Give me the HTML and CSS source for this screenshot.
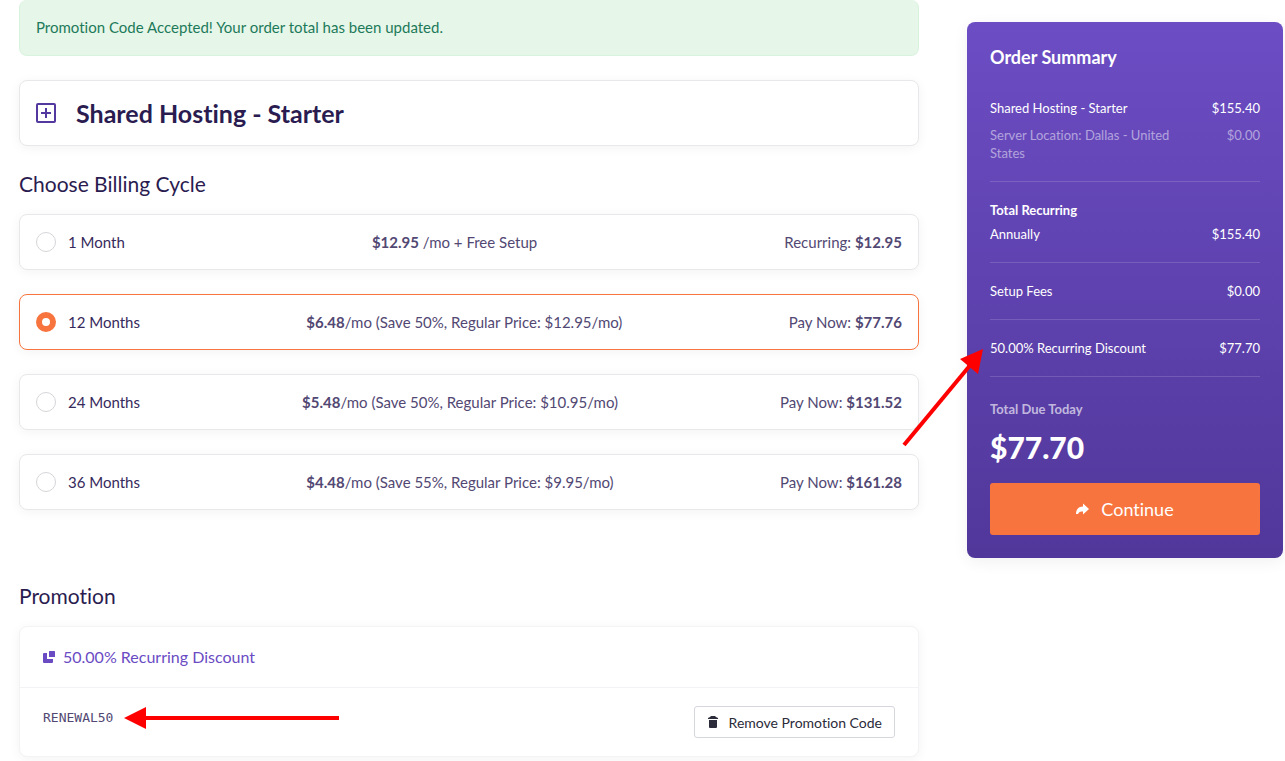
FILE: index.html
```html
<!DOCTYPE html>
<html lang="en">
<head>
    <meta charset="UTF-8">
    <meta name="viewport" content="width=device-width, initial-scale=1.0">
    <title>Configure Order</title>
    <link rel="stylesheet" href="styles.css">
</head>
<body>

<form class="page">
    <main class="main">
        <div class="alert" role="status">Promotion Code Accepted! Your order total has been updated.</div>

        <div class="card product">
            <svg class="product-icon" viewBox="0 0 20 20" aria-hidden="true">
                <rect x="1" y="1" width="18" height="18" rx="1" fill="none" stroke="currentColor" stroke-width="2"/>
                <path d="M10 5v10M5 10h10" fill="none" stroke="currentColor" stroke-width="2"/>
            </svg>
            <h1 class="product-name">Shared Hosting - Starter</h1>
        </div>

        <h2 class="section-title">Choose Billing Cycle</h2>

        <!-- Billing cycle options -->
        <div class="cycles">
            <label class="card cycle">
                <span class="cycle-name"><input class="radio" type="radio" name="cycle" value="1">1 Month</span>
                <span><b>$12.95</b> /mo + Free Setup</span>
                <span>Recurring: <b>$12.95</b></span>
            </label>
            <label class="card cycle selected">
                <span class="cycle-name"><input class="radio" type="radio" name="cycle" value="12" checked>12 Months</span>
                <span><b>$6.48</b>/mo (Save 50%, Regular Price: $12.95/mo)</span>
                <span>Pay Now: <b>$77.76</b></span>
            </label>
            <label class="card cycle">
                <span class="cycle-name"><input class="radio" type="radio" name="cycle" value="24">24 Months</span>
                <span><b>$5.48</b>/mo (Save 50%, Regular Price: $10.95/mo)</span>
                <span>Pay Now: <b>$131.52</b></span>
            </label>
            <label class="card cycle">
                <span class="cycle-name"><input class="radio" type="radio" name="cycle" value="36">36 Months</span>
                <span><b>$4.48</b>/mo (Save 55%, Regular Price: $9.95/mo)</span>
                <span>Pay Now: <b>$161.28</b></span>
            </label>
        </div>

        <!-- Promotion -->
        <h2 class="section-title promo-title">Promotion</h2>
        <div class="card promo">
            <div class="promo-head">
                <svg class="promo-icon" viewBox="0 0 12 12" aria-hidden="true">
                    <path d="M0 3q0-1 1-1h3v6h6v3q0 1-1 1H1q-1 0-1-1z" fill="currentColor"/>
                    <rect x="6" y="0" width="6" height="6" rx="0.5" fill="currentColor"/>
                </svg>
                50.00% Recurring Discount
            </div>
            <div class="promo-body">
                <div class="promo-applied">
                    <code class="promo-code">RENEWAL50</code>
                    <svg class="arrow-left" viewBox="0 0 215 22" aria-hidden="true">
                        <path d="M0 11L22 0v9h193v4H22v9z" fill="#ff0000"/>
                    </svg>
                </div>
                <button class="remove" type="button">
                    <svg class="remove-icon" viewBox="0 0 12 12" aria-hidden="true">
                        <path d="M1 2l2-1 1-1h4l1 1 2 1v1H1zM2 4h8v7q0 1-1 1H3q-1 0-1-1z" fill="currentColor"/>
                    </svg>
                    Remove Promotion Code
                </button>
            </div>
        </div>
    </main>

    <!-- Order summary -->
    <aside class="summary">
        <h2 class="summary-title">Order Summary</h2>
        <div class="group">
            <div class="line"><span>Shared Hosting - Starter</span><span>$155.40</span></div>
            <div class="line muted"><span>Server Location: Dallas - United States</span><span>$0.00</span></div>
        </div>
        <div class="group recurring">
            <div class="line"><b>Total Recurring</b></div>
            <div class="line"><span>Annually</span><span>$155.40</span></div>
        </div>
        <div class="group">
            <div class="line"><span>Setup Fees</span><span>$0.00</span></div>
        </div>
        <div class="group discount">
            <div class="line"><span>50.00% Recurring Discount</span><span>$77.70</span></div>
            <svg class="arrow-up" viewBox="0 0 84 102" aria-hidden="true">
                <path d="M3 99L71 17" fill="none" stroke="#ff0000" stroke-width="4"/>
                <path d="M82 3L59 13l18 15z" fill="#ff0000"/>
            </svg>
        </div>
        <div class="due-label">Total Due Today</div>
        <div class="due">$77.70</div>
        <button class="continue" type="submit">
            <svg class="continue-icon" viewBox="0 0 13 12" aria-hidden="true">
                <path d="M7 0.5l6 5.5-6 5.5V8.5C4 8.500 3 9 2 11H0C0 6 3 3.500 7 3.500z" fill="currentColor"/>
            </svg>
            Continue
        </button>
    </aside>
</form>

</body>
</html>
```

FILE: styles.css
```css
/* Page layout */
* {
    box-sizing: border-box;
}
body {
    margin: 0;
    font-family: Lato, "Open Sans", sans-serif;
    font-size: 15px;
    font-variant-ligatures: none;
    line-height: 24px;
    color: #524873;
    background-color: #fff;
}
h1, h2 {
    margin: 0;
}
button {
    font-family: inherit;
    font-variant-ligatures: none;
    cursor: pointer;
}
.page {
    display: grid;
    grid-template-columns: minmax(0, 1fr) 316px;
    column-gap: 48px;
    align-items: start;
    padding: 0 2px 4px 19px;
}
.alert {
    padding: 15px 16px 16px;
    border: 1px solid #d8f3dd;
    border-top: none;
    border-radius: 8px;
    background-color: #e6f6e9;
    color: #1d7a5a;
}
.card {
    border: 1px solid #e8e8ea;
    border-radius: 8px;
    background-color: #fff;
    box-shadow: 0 2px 12px rgba(0, 0, 0, 0.05);
}

/* Product */
.product {
    display: flex;
    align-items: center;
    gap: 20px;
    margin: 24px 0;
    padding: 16px;
}
.product-icon {
    width: 20px;
    height: 20px;
    color: #52389f;
}
.product-name {
    font-size: 25px;
    line-height: 32px;
    color: #2a1c50;
}
.section-title {
    margin-bottom: 16px;
    font-size: 21px;
    font-weight: 400;
    line-height: 28px;
    color: #2a1c50;
}

/* Billing cycles */
.cycles {
    display: grid;
    gap: 24px;
}
.cycle {
    display: flex;
    justify-content: space-between;
    align-items: center;
    padding: 15px 16px;
    cursor: pointer;
}
.cycle.selected {
    border-color: #f7743e;
}
.cycle-name {
    display: flex;
    align-items: center;
    gap: 12px;
    color: #362a5c;
}
.radio {
    appearance: none;
    width: 20px;
    height: 20px;
    margin: 0;
    border: 1px solid #d6d6da;
    border-radius: 50%;
    background-color: #fff;
}
.radio:checked {
    border: 6px solid #f7743e;
}

/* Promotion */
.promo-title {
    margin-top: 72px;
}
.promo {
    border-color: #f3f3f5;
}
.promo-head {
    display: flex;
    align-items: center;
    gap: 8px;
    padding: 18px 23px;
    border-bottom: 1px solid #f3f3f5;
    font-size: 16px;
    color: #6a4bc4;
}
.promo-icon {
    width: 12px;
    height: 12px;
}
.promo-body {
    display: flex;
    align-items: flex-start;
    justify-content: space-between;
    padding: 18px 23px;
}
.promo-applied {
    display: flex;
    align-items: center;
    gap: 11px;
}
.promo-code {
    font-family: "DejaVu Sans Mono", monospace;
    font-size: 13px;
    line-height: 24px;
}
.arrow-left {
    width: 215px;
    height: 22px;
}
.remove {
    display: flex;
    align-items: center;
    gap: 10px;
    height: 32px;
    padding: 0 12px;
    border: 1px solid #d6d6de;
    border-radius: 3px;
    background-color: #fff;
    font-size: 14px;
    color: #2b2b3a;
}
.remove-icon {
    width: 12px;
    height: 12px;
}

/* Order summary */
.summary {
    margin-top: 22px;
    padding: 23px;
    border-radius: 8px;
    background: linear-gradient(#6c4dc4, #51379a);
    box-shadow: 0 4px 16px rgba(0, 0, 0, 0.06);
    font-size: 13px;
    line-height: 18px;
    color: #fff;
}
.summary-title {
    margin-bottom: 11px;
    font-size: 18px;
    line-height: 24px;
}
.group {
    display: grid;
    gap: 9px;
    padding: 19px 0;
    border-bottom: 1px solid rgba(255, 255, 255, 0.15);
}
.recurring {
    gap: 6px;
}
.discount {
    position: relative;
}
.line {
    display: flex;
    justify-content: space-between;
    gap: 40px;
}
.muted {
    color: rgba(255, 255, 255, 0.5);
}
/* Arrow lies over the gap between the columns */
.arrow-up {
    position: absolute;
    top: 26px;
    right: calc(100% + 5px);
    width: 84px;
    height: 102px;
}
.due-label {
    margin-top: 23px;
    font-weight: 700;
    color: rgba(255, 255, 255, 0.65);
}
.due {
    margin: 9px 0 16px;
    font-size: 30px;
    font-weight: 900;
    line-height: 40px;
}
.continue {
    display: flex;
    justify-content: center;
    align-items: center;
    gap: 12px;
    width: 100%;
    height: 52px;
    border: none;
    border-radius: 3px;
    background-color: #f7743e;
    font-size: 18px;
    color: #fff;
}
.continue-icon {
    width: 13px;
    height: 12px;
}
```
